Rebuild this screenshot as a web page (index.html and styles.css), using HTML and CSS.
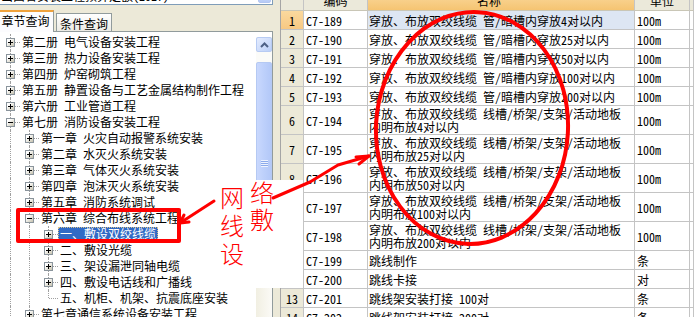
FILE: index.html
```html
<!DOCTYPE html>
<html lang="zh-CN">
<head>
<meta charset="utf-8">
<title>定额查询</title>
<link rel="stylesheet" href="styles.css">
</head>
<body>
<div class="app">
  <div class="left">
    <div class="combo"><span class="combo-text">山西省安装工程预算定额(2017)</span><span class="combo-btn"></span></div>
    <div class="tabs">
      <div class="tab active">章节查询</div>
      <div class="tab">条件查询</div>
    </div>
    <div class="panel">
      <div class="tree">
        <div class="row"><span class="c"><span class="box plus"></span></span><span class="label">第二册 电气设备安装工程</span></div>
        <div class="row"><span class="c"><span class="box plus"></span></span><span class="label">第三册 热力设备安装工程</span></div>
        <div class="row"><span class="c"><span class="box plus"></span></span><span class="label">第四册 炉窑砌筑工程</span></div>
        <div class="row"><span class="c"><span class="box plus"></span></span><span class="label">第五册 静置设备与工艺金属结构制作工程</span></div>
        <div class="row"><span class="c"><span class="box plus"></span></span><span class="label">第六册 工业管道工程</span></div>
        <div class="row"><span class="c"><span class="box"></span></span><span class="label">第七册 消防设备安装工程</span></div>
        <div class="row"><span class="g v"></span><span class="c"><span class="box plus"></span></span><span class="label">第一章 火灾自动报警系统安装</span></div>
        <div class="row"><span class="g v"></span><span class="c"><span class="box plus"></span></span><span class="label">第二章 水灭火系统安装</span></div>
        <div class="row"><span class="g v"></span><span class="c"><span class="box plus"></span></span><span class="label">第三章 气体灭火系统安装</span></div>
        <div class="row"><span class="g v"></span><span class="c"><span class="box plus"></span></span><span class="label">第四章 泡沫灭火系统安装</span></div>
        <div class="row"><span class="g v"></span><span class="c"><span class="box plus"></span></span><span class="label">第五章 消防系统调试</span></div>
        <div class="row"><span class="g v"></span><span class="c"><span class="box"></span></span><span class="label">第六章 综合布线系统工程</span></div>
        <div class="row"><span class="g v"></span><span class="g v"></span><span class="c"><span class="box plus"></span></span><span class="label selected">一、敷设双绞线缆</span></div>
        <div class="row"><span class="g v"></span><span class="g v"></span><span class="c"><span class="box plus"></span></span><span class="label">二、敷设光缆</span></div>
        <div class="row"><span class="g v"></span><span class="g v"></span><span class="c"><span class="box plus"></span></span><span class="label">三、架设漏泄同轴电缆</span></div>
        <div class="row"><span class="g v"></span><span class="g v"></span><span class="c"><span class="box plus"></span></span><span class="label">四、敷设电话线和广播线</span></div>
        <div class="row"><span class="g v"></span><span class="g v"></span><span class="c last"></span><span class="label">五、机柜、机架、抗震底座安装</span></div>
        <div class="row"><span class="g v"></span><span class="c"><span class="box plus"></span></span><span class="label">第七章通信系统设备安装工程</span></div>
      </div>
      <div class="vscroll">
        <div class="sb-btn"><svg width="9" height="6" viewBox="0 0 9 6"><path d="M1 5 L4.5 1.5 L8 5" fill="none" stroke="#4d6185" stroke-width="2"/></svg></div>
        <div class="sb-gap"></div>
        <div class="sb-thumb"><span class="grip"></span></div>
        <div class="sb-track"></div>
      </div>
    </div>
  </div>
  <div class="splitter"></div>
  <div class="grid">
    <div class="cell hd"></div><div class="cell hd">编码</div><div class="cell hd hd-on">名称</div><div class="cell hd">单位</div><div class="cell hd"></div>

    <div class="cell num num-on">1</div><div class="cell code">C7-189</div><div class="cell name name-on">穿放、布放双绞线缆 管/暗槽内穿放4对以内</div><div class="cell unit">100m</div><div class="cell"></div>
    <div class="cell num">2</div><div class="cell code">C7-190</div><div class="cell name">穿放、布放双绞线缆 管/暗槽内穿放25对以内</div><div class="cell unit">100m</div><div class="cell"></div>
    <div class="cell num">3</div><div class="cell code">C7-191</div><div class="cell name">穿放、布放双绞线缆 管/暗槽内穿放50对以内</div><div class="cell unit">100m</div><div class="cell"></div>
    <div class="cell num">4</div><div class="cell code">C7-192</div><div class="cell name">穿放、布放双绞线缆 管/暗槽内穿放100对以内</div><div class="cell unit">100m</div><div class="cell"></div>
    <div class="cell num">5</div><div class="cell code">C7-193</div><div class="cell name">穿放、布放双绞线缆 管/暗槽内穿放200对以内</div><div class="cell unit">100m</div><div class="cell"></div>

    <div class="cell num">6</div><div class="cell code">C7-194</div><div class="cell name two">穿放、布放双绞线缆 线槽/桥架/支架/活动地板<br>内明布放4对以内</div><div class="cell unit">100m</div><div class="cell"></div>
    <div class="cell num">7</div><div class="cell code">C7-195</div><div class="cell name two">穿放、布放双绞线缆 线槽/桥架/支架/活动地板<br>内明布放25对以内</div><div class="cell unit">100m</div><div class="cell"></div>
    <div class="cell num">8</div><div class="cell code">C7-196</div><div class="cell name two">穿放、布放双绞线缆 线槽/桥架/支架/活动地板<br>内明布放50对以内</div><div class="cell unit">100m</div><div class="cell"></div>
    <div class="cell num">9</div><div class="cell code">C7-197</div><div class="cell name two">穿放、布放双绞线缆 线槽/桥架/支架/活动地板<br>内明布放100对以内</div><div class="cell unit">100m</div><div class="cell"></div>
    <div class="cell num">10</div><div class="cell code">C7-198</div><div class="cell name two">穿放、布放双绞线缆 线槽/桥架/支架/活动地板<br>内明布放200对以内</div><div class="cell unit">100m</div><div class="cell"></div>

    <div class="cell num">11</div><div class="cell code">C7-199</div><div class="cell name">跳线制作</div><div class="cell unit">条</div><div class="cell"></div>
    <div class="cell num">12</div><div class="cell code">C7-200</div><div class="cell name">跳线卡接</div><div class="cell unit">对</div><div class="cell"></div>
    <div class="cell num">13</div><div class="cell code">C7-201</div><div class="cell name">跳线架安装打接 100对</div><div class="cell unit">条</div><div class="cell"></div>
    <div class="cell num">14</div><div class="cell code">C7-202</div><div class="cell name">跳线架安装打接 200对</div><div class="cell unit">条</div><div class="cell"></div>
  </div>
</div>

<div class="note">
  <div class="note-col">网<br>线<br>设</div>
  <div class="note-col second">络<br>敷</div>
</div>

<svg class="marks" width="694" height="317" viewBox="0 0 694 317">
  <g fill="none" stroke="#ff0000" stroke-linecap="round" stroke-linejoin="round">
    <rect x="18" y="210" width="161" height="31" stroke-width="4"/>
    <ellipse cx="472" cy="128" rx="96" ry="116" transform="rotate(3 472 128)" stroke-width="4"/>
    <path d="M214 201 L180 223" stroke-width="3"/>
    <path d="M180 223 L189 222 M180 223 L184 215" stroke-width="3"/>
    <path d="M273 198 L310 182 L338 165 L369 156" stroke-width="3"/>
    <path d="M369 156 L356 157 M369 156 L359 164" stroke-width="3"/>
  </g>
</svg>
</body>
</html>
```

FILE: styles.css
```css
html, body {
  margin: 0;
  padding: 0;
  width: 694px;
  height: 317px;
  overflow: hidden;
  background: #ece9d8;
}

body {
  position: relative;
  font-family: "Noto Sans Mono CJK SC", "Noto Sans CJK SC", sans-serif;
  font-size: 12px;
  color: #000;
}

.app {
  display: flex;
  height: 317px;
}

/* ---------- left side ---------- */
.left {
  width: 273px;
  flex: none;
  display: flex;
  flex-direction: column;
}

.combo {
  margin-top: -14px;
  margin-left: -2px;
  height: 19px;
  box-sizing: border-box;
  border: 1px solid #7f9db9;
  background: #fff;
  display: flex;
  align-items: center;
  justify-content: space-between;
}

.combo-text {
  padding-left: 2px;
  white-space: nowrap;
  line-height: 17px;
}

.combo-btn {
  width: 13px;
  height: 15px;
  margin-right: 1px;
  border-radius: 2px;
  box-sizing: border-box;
  border: 1px solid #b3c6f1;
  background: linear-gradient(#dbe6fe, #b7cbf6);
}

.tabs {
  height: 26px;
  display: flex;
  align-items: flex-end;
  gap: 2px;
  position: relative;
  z-index: 1;
}

.tab {
  box-sizing: border-box;
  border: 1px solid #919b9c;
  border-bottom: none;
  display: flex;
  align-items: center;
  justify-content: center;
  white-space: nowrap;
}

.tab.active {
  margin-left: -3px;
  width: 57px;
  height: 22px;
  margin-bottom: -1px;
  border-top: 2px solid #f0a23c;
  background: #fcfcfe;
  padding-bottom: 4px;
}

.tab:not(.active) {
  width: 56px;
  height: 18px;
  background: linear-gradient(#ffffff, #ecebe5);
  padding-top: 1px;
}

.panel {
  flex: 1;
  margin-left: -1px;
  border: 1px solid #919b9c;
  border-bottom: none;
  background: #fff;
  display: flex;
  padding-top: 2px;
  min-height: 0;
}

.tree {
  flex: 1;
  padding-left: 1px;
  overflow: hidden;
}

.row {
  height: 16px;
  display: flex;
  white-space: nowrap;
}

.g, .c {
  position: relative;
  width: 19px;
  height: 16px;
  flex: none;
}

.g.v::before,
.c::before {
  content: "";
  position: absolute;
  left: 9px;
  top: 0;
  height: 16px;
  border-left: 1px dotted #a0a0a0;
}

.c.last::before {
  height: 8px;
}

.c::after {
  content: "";
  position: absolute;
  left: 10px;
  top: 8px;
  width: 9px;
  border-top: 1px dotted #a0a0a0;
}

.box {
  position: absolute;
  z-index: 1;
  left: 5px;
  top: 4px;
  width: 9px;
  height: 9px;
  box-sizing: border-box;
  border: 1px solid #8a949c;
  background: linear-gradient(135deg, #ffffff 25%, #d9d6c8 75%, #c4c0ae);
}

.box::before {
  content: "";
  position: absolute;
  left: 1px;
  top: 3px;
  width: 5px;
  height: 1px;
  background: #000;
}

.box.plus::after {
  content: "";
  position: absolute;
  left: 3px;
  top: 1px;
  width: 1px;
  height: 5px;
  background: #000;
}

.label {
  height: 14px;
  line-height: 14px;
  margin-top: 1px;
  padding: 0 2px;
}

.label.selected {
  background: #316ac5;
  color: #fff;
  outline: 1px dotted #d7c38e;
  outline-offset: -1px;
}

.vscroll {
  width: 16px;
  flex: none;
  margin-top: 3px;
  display: flex;
  flex-direction: column;
  background: #f5f4ef;
}

.sb-btn {
  height: 15px;
  box-sizing: border-box;
  border: 1px solid #b7cbf3;
  border-radius: 2px;
  background: linear-gradient(135deg, #e4ecfe, #bcd0f8);
  display: flex;
  align-items: center;
  justify-content: center;
}

.sb-gap {
  height: 10px;
  background: #fbfbf8;
}

.sb-thumb {
  height: 202px;
  box-sizing: border-box;
  border: 1px solid #b5c9f3;
  border-radius: 2px;
  background: linear-gradient(90deg, #c9d8fd, #bdd0fb 50%, #b3c8f8);
  display: flex;
  align-items: center;
  justify-content: center;
}

.grip {
  width: 7px;
  height: 7px;
  background: repeating-linear-gradient(#eef3fe 0 1px, #8cabeb 1px 2px);
}

.sb-track {
  flex: 1;
  background: linear-gradient(90deg, #f1efe2, #fbfaf6);
}

.splitter {
  width: 7px;
  flex: none;
  background: #ece9d8;
}

/* ---------- grid ---------- */
.grid {
  flex: 1;
  display: grid;
  grid-template-columns: 23px 64px 267px 55px 1fr;
  grid-template-rows: 21px repeat(5, 19px) repeat(5, 29px) repeat(4, 19px);
  align-content: start;
  margin-top: -10px;
  height: 327px;
  border-left: 1px solid #a5a5a5;
  background: #fff;
  overflow: hidden;
}

.cell {
  box-sizing: border-box;
  border-right: 1px solid #c4c4c4;
  border-bottom: 1px solid #c4c4c4;
  display: flex;
  align-items: center;
  white-space: nowrap;
  overflow: hidden;
}

.hd {
  justify-content: center;
  background: #ebe9da;
  border-bottom-color: #c9c6b6;
}

.hd-on {
  background: linear-gradient(#fbdca4, #f5c472);
  padding-right: 24px;
}

.num {
  justify-content: center;
  background: #ece9d8;
}

.num-on {
  background: linear-gradient(#fbd99e, #f7c883);
}

.code {
  padding-left: 2px;
}

.name {
  padding-left: 1px;
}

.name-on {
  background: #dde6f3;
}

.name.two {
  align-items: flex-start;
  padding-top: 1px;
  line-height: 13px;
}

.unit {
  padding-left: 2px;
}

/* ---------- annotation ---------- */
.note {
  position: absolute;
  left: 194px;
  top: 180px;
  width: 109px;
  height: 108px;
  background: #fff;
  display: flex;
  gap: 6px;
  padding-left: 26px;
  box-sizing: border-box;
  color: #ff0000;
  font-family: "Noto Sans CJK SC", sans-serif;
  font-size: 24px;
  font-weight: 300;
}

.note-col {
  width: 24px;
  line-height: 28px;
  padding-top: 3px;
}

.note-col.second {
  line-height: 27px;
  padding-top: 0;
  margin-top: -2px;
}

.marks {
  position: absolute;
  left: 0;
  top: 0;
  pointer-events: none;
}
```
